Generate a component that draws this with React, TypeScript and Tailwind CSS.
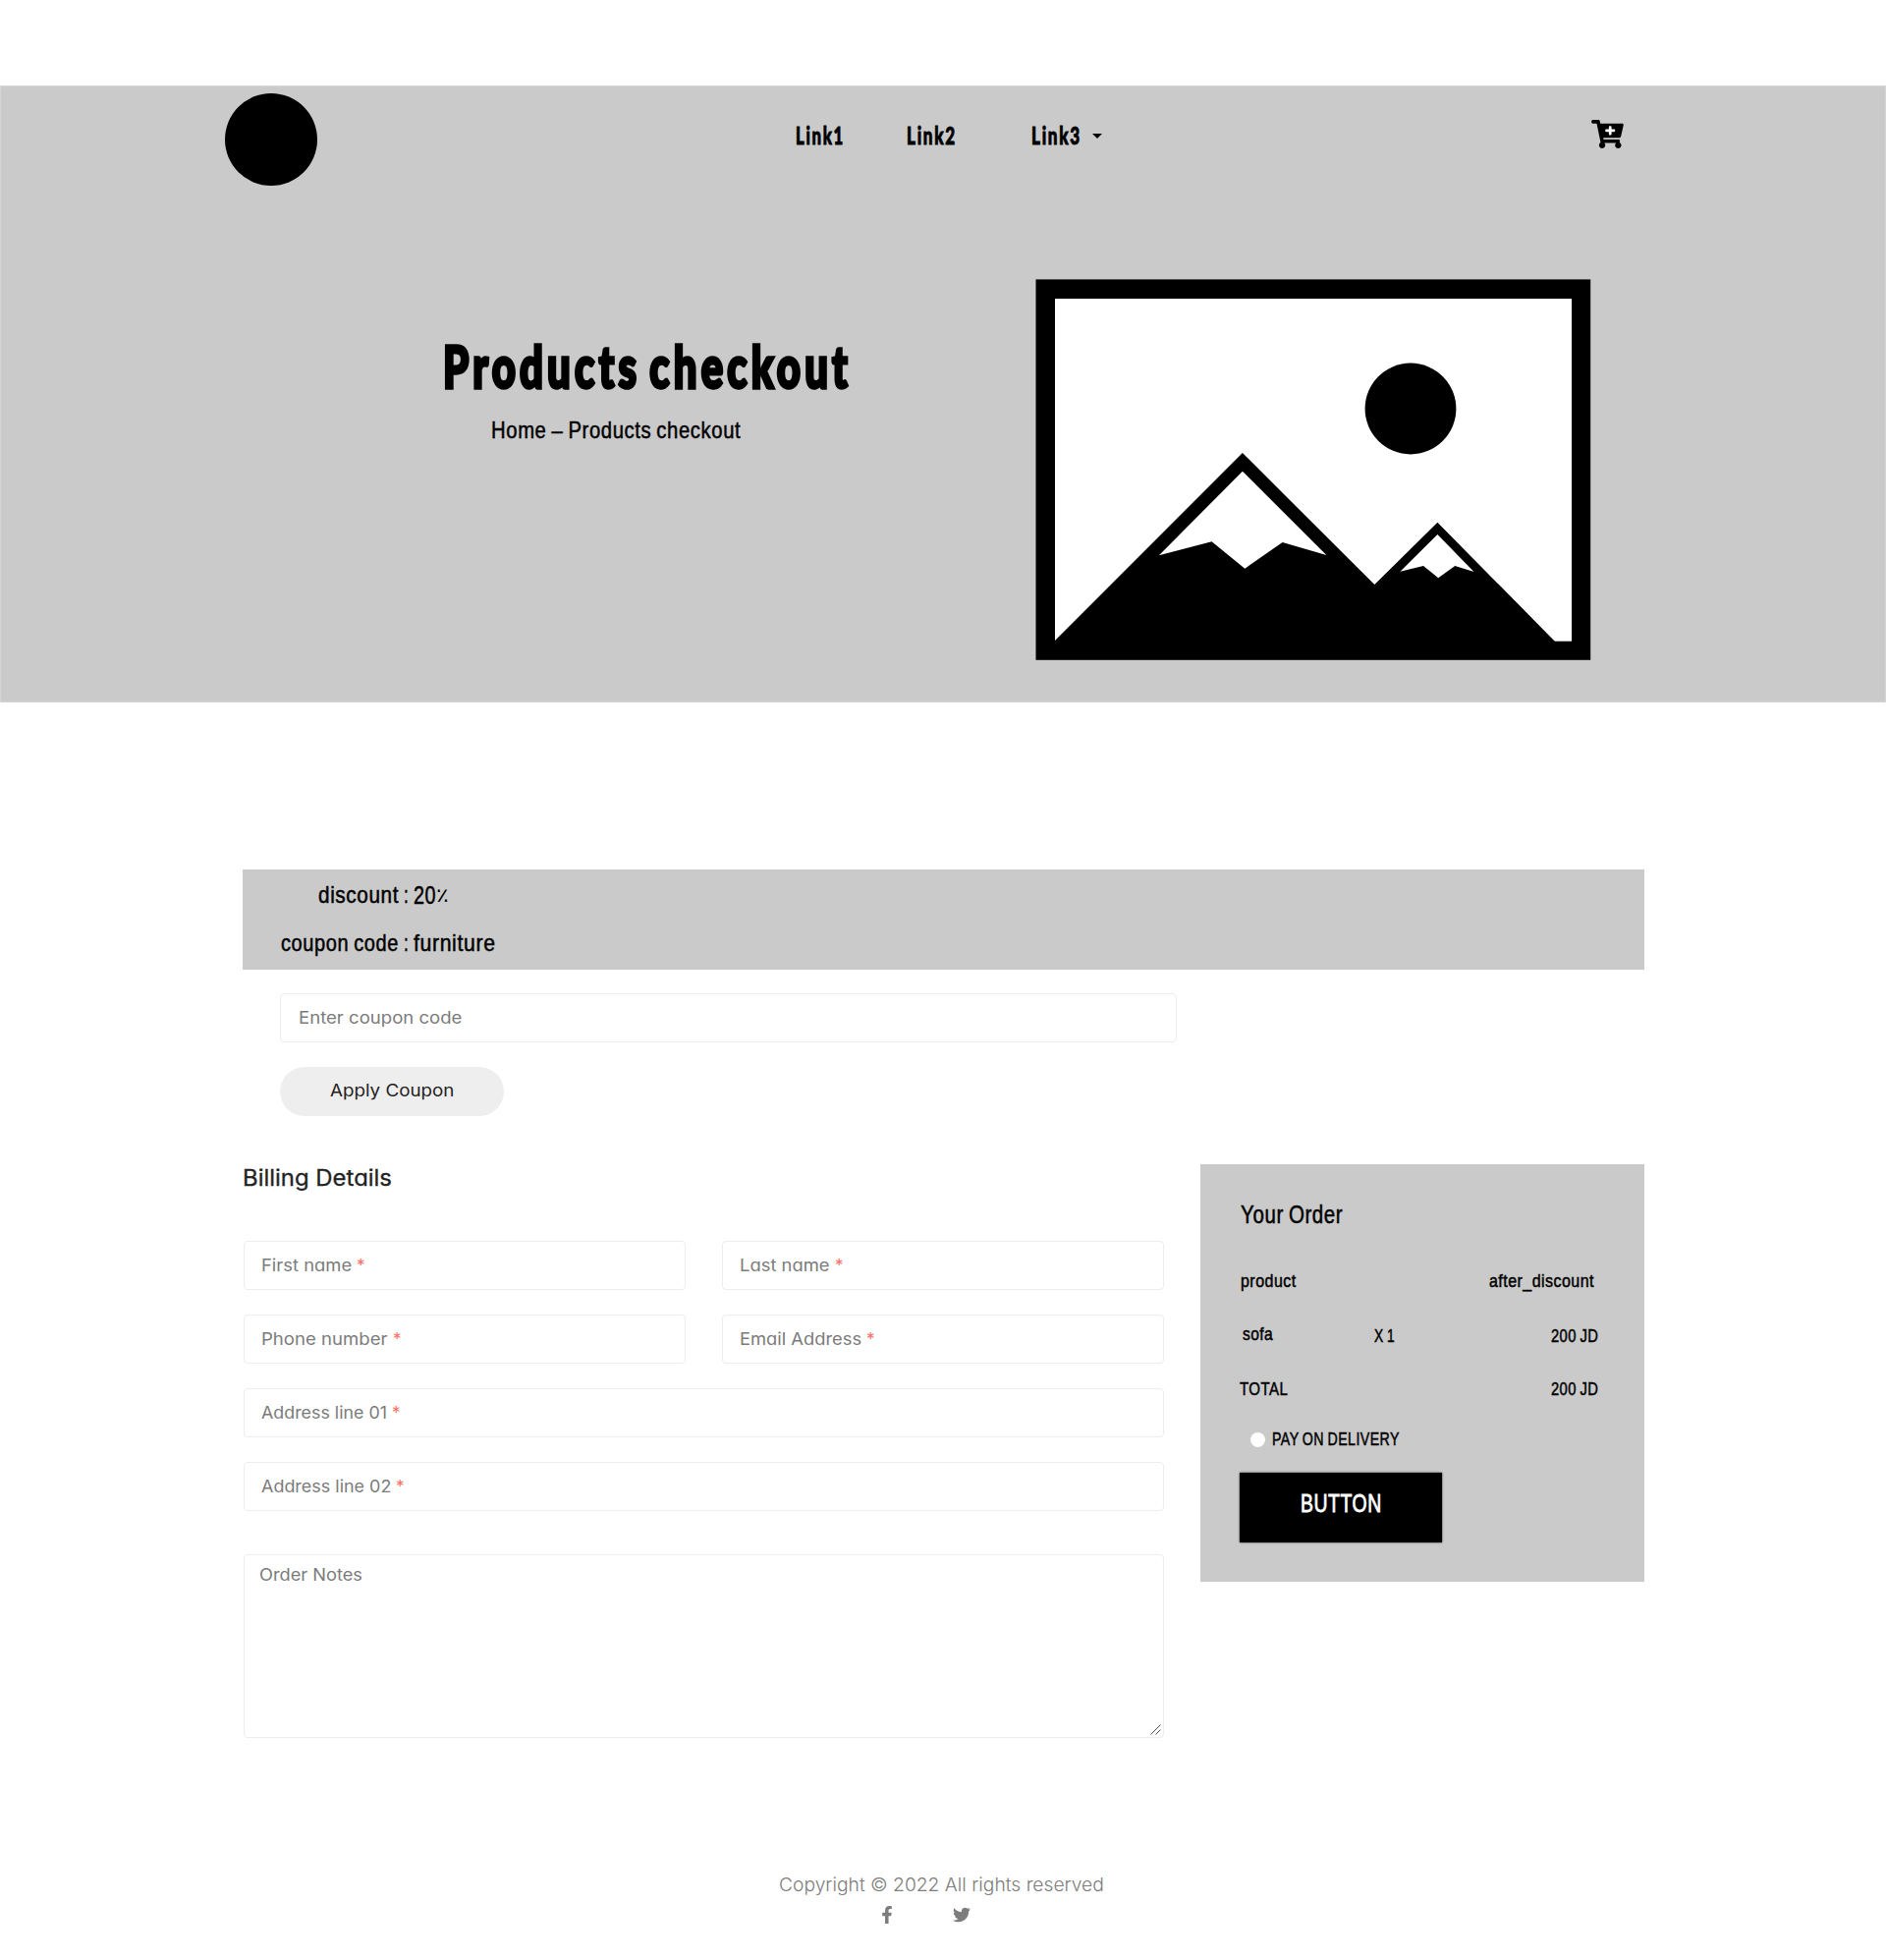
import React, { useLayoutEffect, useRef, useState } from "react";
import { FaCartPlus, FaFacebookF, FaTwitter } from "react-icons/fa";

/* Stretches or condenses one line of text to the width of its box. */
function Fit({ className, children }: { className: string; children: React.ReactNode }) {
  const box = useRef<HTMLSpanElement>(null);
  const line = useRef<HTMLSpanElement>(null);
  const [scale, setScale] = useState(1);
  useLayoutEffect(() => {
    if (box.current && line.current && line.current.offsetWidth > 0) {
      setScale(box.current.clientWidth / line.current.offsetWidth);
    }
  }, []);
  return (
    <span ref={box} className={`block shrink-0 whitespace-nowrap ${className}`}>
      <span ref={line} className="inline-block origin-left" style={{ transform: `scaleX(${scale})` }}>
        {children}
      </span>
    </span>
  );
}

const narrow =
  "font-['Liberation_Sans',Arial,sans-serif] text-black tracking-[0.03em] [word-spacing:-0.06em] [-webkit-text-stroke:0.5px_currentColor]";
const bold = "font-['Lato',sans-serif] font-black text-black tracking-[0.1em]";
const link = "[-webkit-text-stroke:0.9px_#000]";
const geo = "font-['Inter',sans-serif] [font-feature-settings:'cv11'_1]";

function Field({ label, width }: { label: string; width: string }) {
  return (
    <div className="flex h-[50px] w-full items-center rounded-[4px] border border-[#ededed] bg-white pl-[17px]">
      <Fit className={`${geo} text-[17px] leading-6 text-[#7b7b7b] ${width}`}>{label}</Fit>
      <span className={`${geo} ml-[5px] text-[17px] leading-6 text-[#ff6b5e]`}>*</span>
    </div>
  );
}

function Picture() {
  return (
    <svg className="block" width="566" height="389" viewBox="1054 284 566 389">
      <rect x="1054.5" y="284.4" width="564.7" height="387.4" fill="#000" />
      <rect x="1074" y="304" width="526" height="348.7" fill="#fff" />
      <circle cx="1436" cy="416" r="46.4" fill="#000" />
      <path d="M1074 652 1264.9 461 1399.3 595 1463.4 531.7 1582.8 652.7V656H1074Z" fill="#000" />
      <path d="M1264.9 479.7 1179.9 565.3 1233.6 551.3 1267.3 578.7 1305.6 552 1350.3 565Z" fill="#fff" />
      <path d="M1463.4 544 1425.4 581.7 1449.1 576 1464.2 588.3 1481.2 576 1500.5 582Z" fill="#fff" />
    </svg>
  );
}

function Header() {
  return (
    <header className="h-[628px] bg-[#cacaca] shadow-[inset_0_0_2px_#f0f0f0]">
      <nav className="flex h-[197px] items-start pl-[229px]">
        <div className="mt-2 size-[94px] shrink-0 rounded-full bg-black" />
        <Fit className={`${bold} ${link} mt-[36px] ml-[487px] w-[50px] text-[24.5px] leading-[30px]`}>Link1</Fit>
        <Fit className={`${bold} ${link} mt-[36px] ml-[63px] w-[51px] text-[24.5px] leading-[30px]`}>Link2</Fit>
        <Fit className={`${bold} ${link} mt-[36px] ml-[76px] w-[51px] text-[24.5px] leading-[30px]`}>Link3</Fit>
        <svg className="mt-[49px] ml-[11px] shrink-0" width="10" height="5" viewBox="0 0 10 5">
          <path d="M0 0H10L5 5Z" />
        </svg>
        <div className="relative mt-[35px] ml-[498px] h-[29px] w-[33px] shrink-0">
          <div className="absolute top-[5px] left-[13px] h-[13px] w-[13px] bg-white" />
          <FaCartPlus className="relative h-[29px] w-[33px] text-black" />
        </div>
      </nav>
      <div className="flex">
        <div className="ml-[451px] w-[603px] shrink-0 pt-[54px]">
          <h1>
            <Fit
              className={`${bold} w-[416px] text-[59px] leading-[70px] [word-spacing:-0.12em] [-webkit-text-stroke:3.5px_#000]`}
            >
              Products checkout
            </Fit>
          </h1>
          <Fit className={`${narrow} mt-[15px] ml-[49px] w-[254px] text-[24.5px] leading-[30px]`}>
            Home – Products checkout
          </Fit>
        </div>
        <Picture />
      </div>
    </header>
  );
}

function Coupon() {
  return (
    <section>
      <div className="flex h-[102px] flex-col gap-[19px] bg-[#cacaca] pt-[11px]">
        <div className="flex">
          <Fit className={`${narrow} ml-[77px] w-[82px] text-[24px] leading-[30px]`}>discount</Fit>
          <Fit className={`${narrow} ml-[5px] w-[5px] text-[24px] leading-[30px]`}>:</Fit>
          <Fit className={`${narrow} ml-[5px] w-[23px] text-[25px] leading-[30px]`}>20</Fit>
          <Fit className="w-[13px] font-['DejaVu_Sans',sans-serif] text-[20px] leading-[30px] text-black">٪</Fit>
        </div>
        <div className="flex">
          <Fit className={`${narrow} ml-[39px] w-[120px] text-[24px] leading-[30px]`}>coupon code</Fit>
          <Fit className={`${narrow} ml-[5px] w-[5px] text-[24px] leading-[30px]`}>:</Fit>
          <Fit className={`${narrow} ml-[5px] w-[84px] text-[24px] leading-[30px]`}>furniture</Fit>
        </div>
      </div>
      <div className="mt-6 ml-[38px] flex h-[50px] w-[913px] items-center rounded-[4px] border border-[#ededed] pl-[18px]">
        <Fit className={`${geo} w-[166px] text-[17px] leading-6 text-[#7b7b7b]`}>Enter coupon code</Fit>
      </div>
      <button className="mt-[25px] ml-[38px] flex h-[50px] w-[228px] items-center justify-center rounded-full bg-[#eeeeee] pb-[2px]">
        <Fit className={`${geo} w-[126px] text-left text-[17px] leading-6 text-[#222]`}>Apply Coupon</Fit>
      </button>
    </section>
  );
}

function Billing() {
  return (
    <section className="ml-px w-[937px] shrink-0">
      <h3>
        <Fit className={`${geo} -ml-px w-[152px] text-[22.5px] leading-[28px] text-[#222] [-webkit-text-stroke:0.3px_#222]`}>
          Billing Details
        </Fit>
      </h3>
      <div className="mt-[50px] grid grid-cols-2 gap-x-[37px] gap-y-[25px]">
        <Field label="First name" width="w-[92px]" />
        <Field label="Last name" width="w-[92px]" />
        <Field label="Phone number" width="w-[129px]" />
        <Field label="Email Address" width="w-[124px]" />
        <div className="col-span-2">
          <Field label="Address line 01" width="w-[128px]" />
        </div>
        <div className="col-span-2">
          <Field label="Address line 02" width="w-[132px]" />
        </div>
      </div>
      <div className="mt-[44px] flex h-[187px] justify-between rounded-[4px] border border-[#ededed] pt-[8px] pl-[15px]">
        <Fit className={`${geo} w-[105px] text-[17px] leading-6 text-[#7b7b7b]`}>Order Notes</Fit>
        <svg className="mr-[2px] mb-[2px] self-end" width="11" height="11" viewBox="0 0 11 11" stroke="#555" strokeWidth="1">
          <path d="M0.5 10.5 10.5 0.5M5.5 10.5 10.5 5.5" />
        </svg>
      </div>
    </section>
  );
}

function Order() {
  return (
    <aside className="ml-[37px] h-[425px] w-[452px] bg-[#cacaca] pt-[36px] pl-10">
      <Fit className={`${narrow} ml-px w-[104px] text-[25px] leading-[30px]`}>Your Order</Fit>
      <div className="mt-[41px] flex h-6">
        <Fit className={`${narrow} ml-px w-[57px] text-[18.5px] leading-6`}>product</Fit>
        <Fit className={`${narrow} ml-[196px] w-[107px] text-[18.5px] leading-6`}>after_discount</Fit>
      </div>
      <div className="mt-[32px] flex h-6">
        <Fit className={`${narrow} -mt-[2px] ml-[3px] w-[31px] text-[18.5px] leading-6`}>sofa</Fit>
        <Fit className={`${narrow} ml-[103px] w-[21px] text-[19px] leading-6`}>X 1</Fit>
        <Fit className={`${narrow} ml-[159px] w-[48px] text-[19px] leading-6`}>200 JD</Fit>
      </div>
      <div className="mt-[30px] flex h-6">
        <Fit className={`${narrow} w-[49px] text-[19px] leading-6`}>TOTAL</Fit>
        <Fit className={`${narrow} ml-[268px] w-[48px] text-[19px] leading-6`}>200 JD</Fit>
      </div>
      <div className="mt-[27px] flex h-6">
        <span className="mt-[5px] ml-[11px] size-[15px] rounded-full bg-white" />
        <Fit className={`${narrow} ml-[7px] w-[130px] text-[19px] leading-6`}>PAY ON DELIVERY</Fit>
      </div>
      <button className="mt-[22px] flex h-[71px] w-[206px] justify-center bg-black pt-4 shadow-[0_0_2px_#333]">
        <Fit className="w-[83px] text-left font-['Liberation_Sans',sans-serif] text-[25px] leading-[30px] tracking-[0.03em] text-white [-webkit-text-stroke:0.8px_#fff]">
          BUTTON
        </Fit>
      </button>
    </aside>
  );
}

export default function App() {
  return (
    <div className="h-[1995px] w-[1920px] overflow-hidden bg-white pt-[87px]">
      <Header />
      <main className="mt-[170px] ml-[247px] w-[1427px]">
        <Coupon />
        <div className="mt-[49px] flex items-start">
          <Billing />
          <Order />
        </div>
      </main>
      <footer className="mt-[134px] pl-[793px] text-[#7d7d7d]">
        <Fit className={`${geo} w-[331px] text-[18.5px] font-light leading-[30px]`}>
          Copyright © 2022 All rights reserved
        </Fit>
        <div className="mt-[7px] flex items-center pl-[104px]">
          <FaFacebookF className="h-[18px] w-[12px]" />
          <FaTwitter className="ml-[61px] size-[18px]" />
        </div>
      </footer>
    </div>
  );
}
